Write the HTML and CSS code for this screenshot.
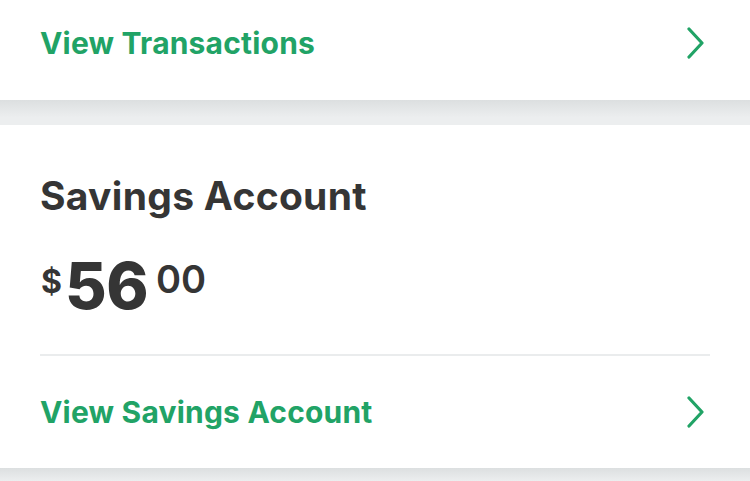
FILE: index.html
```html
<!DOCTYPE html>
<html>
<head>
<meta charset="utf-8">
<link rel="stylesheet" href="styles.css">
</head>
<body>
<div class="card card-top">
  <a class="link-row link-row-top" href="#">
    <span class="link-text">View Transactions</span>
    <svg class="chev" width="18" height="32" viewBox="0 0 18 32"><path d="M2 2 L15 16 L2 30" fill="none" stroke="#21a366" stroke-width="3.2" stroke-linecap="round" stroke-linejoin="round"/></svg>
  </a>
</div>
<div class="gap"></div>
<div class="card card-savings">
  <h2 class="title">Savings Account</h2>
  <div class="amount"><span class="cur">$</span><span class="whole">56</span><span class="cents">00</span></div>
  <div class="divider"></div>
  <a class="link-row link-row-bottom" href="#">
    <span class="link-text">View Savings Account</span>
    <svg class="chev" width="18" height="32" viewBox="0 0 18 32"><path d="M2 2 L15 16 L2 30" fill="none" stroke="#21a366" stroke-width="3.2" stroke-linecap="round" stroke-linejoin="round"/></svg>
  </a>
</div>
<div class="gap-bottom"></div>
</body>
</html>
```
FILE: styles.css
```css
html, body {
  margin: 0;
  padding: 0;
}
body {
  width: 750px;
  height: 481px;
  overflow: hidden;
  background: #eceeef;
  font-family: Inter, Lato, sans-serif;
}
.card {
  background: #ffffff;
}
.card-top {
  height: 100px;
}
.link-row {
  display: flex;
  align-items: center;
  justify-content: space-between;
  text-decoration: none;
  padding: 0 45px 0 40px;
}
.link-row-top {
  height: 86px;
}
.link-text {
  color: #21a366;
  font-weight: 700;
  font-size: 30px;
  letter-spacing: 0.2px;
}
.chev {
  display: block;
}
.gap {
  height: 25px;
  background: linear-gradient(#dcdfe0, #eceeef 70%);
}
.card-savings {
  height: 343px;
  padding: 0 40px;
  box-sizing: border-box;
  display: flex;
  flex-direction: column;
}
.title {
  margin: 0;
  padding-top: 49px;
  font-size: 39px;
  line-height: 44px;
  font-weight: 700;
  color: #353535;
  letter-spacing: 0.3px;
}
.amount {
  display: flex;
  align-items: flex-start;
  color: #353535;
  font-weight: 700;
  margin-top: 36px;
  height: 62px;
}
.cur {
  font-size: 32px;
  line-height: 32px;
  margin-top: 12px;
  margin-left: 1px;
  margin-right: 3px;
}
.whole {
  font-size: 64px;
  line-height: 63px;
  font-weight: 800;
  letter-spacing: -0.5px;
}
.cents {
  font-size: 38px;
  line-height: 36px;
  margin-left: 8px;
  margin-top: 7px;
  font-weight: 600;
}
.divider {
  height: 2px;
  background: #eaeced;
  margin-top: 38px;
}
.link-row-bottom {
  padding: 0 5px 0 0;
  height: 112px;
}
.gap-bottom {
  height: 13px;
  background: linear-gradient(#dcdfe0, #eceeef);
}
```
